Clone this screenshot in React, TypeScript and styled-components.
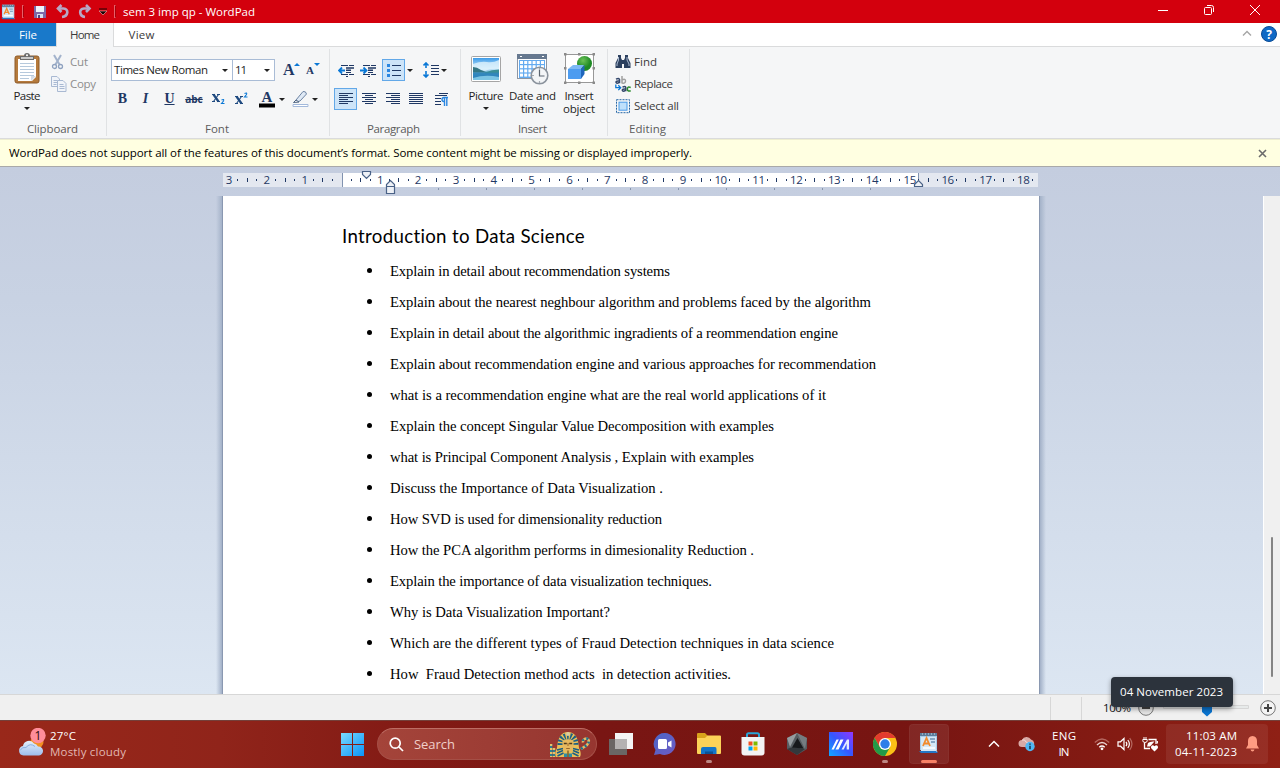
import React, { useLayoutEffect, useRef, useState } from "react";
import styled, { createGlobalStyle } from "styled-components";

const Global = createGlobalStyle`
  * { box-sizing: border-box; }
  html, body { margin: 0; padding: 0; }
  body {
    width: 1280px; height: 768px; overflow: hidden;
    font-family: "Open Sans", "Noto Sans", sans-serif;
    font-size: 11.5px; line-height: 16px; color: #1e1e1e;
  }
  svg { display: block; flex: none; }
`;

/* ---------- text fitted to a given width by tracking ---------- */

const FitBox = styled.span<{ $w: number }>`
  display: block;
  flex: none;
  width: ${(p) => p.$w}px;
  white-space: pre;
`;

function Fit({ w, children }: { w: number; children: string }) {
  const ref = useRef<HTMLSpanElement>(null);
  const [spacing, setSpacing] = useState(0);
  useLayoutEffect(() => {
    if (ref.current) {
      const natural = ref.current.getBoundingClientRect().width;
      setSpacing((w - natural) / Math.max(1, children.length - 1));
    }
  }, [w, children]);
  return (
    <FitBox $w={w}>
      <span ref={ref} style={{ letterSpacing: spacing }}>{children}</span>
    </FitBox>
  );
}

/* ---------- window ---------- */

const Screen = styled.div`
  position: relative;
  width: 1280px; height: 768px;
  display: flex; flex-direction: column;
  overflow: hidden;
`;

const TitleBar = styled.header`
  height: 23px; flex: none;
  display: flex; align-items: center;
  background: #d3000d; color: #fff;
  padding-left: 1px;
`;
const TitleSep = styled.div<{ $ml: number; $mr: number }>`
  width: 2px; height: 13px;
  margin: 0 ${(p) => p.$mr}px 0 ${(p) => p.$ml}px;
  border: 1px solid #e8606a; border-right-color: #a8000a;
`;
const Gap = styled.div<{ $w: number }>`
  width: ${(p) => p.$w}px; flex: none;
`;
const WindowButtons = styled.div`
  margin-left: auto; display: flex; align-items: center;
  height: 20px; padding: 0 19px 3px 0; gap: 34px;
`;

const TabBar = styled.nav`
  height: 24px; flex: none;
  display: flex; background: #fff;
  border-bottom: 1px solid #dadbdc;
`;
const Tab = styled.div<{ $w: number; $kind?: "file" | "active" }>`
  width: ${(p) => p.$w}px;
  height: ${(p) => (p.$kind === "active" ? 24 : 23)}px;
  display: flex; justify-content: center; align-items: center;
  padding-bottom: ${(p) => (p.$kind === "active" ? 1 : 0)}px;
  color: ${(p) => (p.$kind === "file" ? "#fff" : "#3b3b3b")};
  background: ${(p) => (p.$kind === "file" ? "#1979ca" : p.$kind === "active" ? "#f5f6f7" : "transparent")};
  border: 0 solid #dadbdc;
  border-width: ${(p) => (p.$kind === "active" ? "0 1px" : "0")};
`;
const TabTools = styled.div`
  margin-left: auto; display: flex; align-items: center; gap: 9px; padding: 0 3px 2px 0;
`;

/* ---------- ribbon ---------- */

const Ribbon = styled.section`
  height: 92px; flex: none;
  display: flex; background: #f5f6f7;
  border-bottom: 1px solid #dadbdc;
  padding-top: 2px;
`;
const Group = styled.div<{ $w: number }>`
  width: ${(p) => p.$w}px; height: 87px;
  display: flex; flex-direction: column;
  border-right: 1px solid #e0e2e4;
`;
const GroupBody = styled.div`
  height: 72px; display: flex;
`;
const GroupLabel = styled.div`
  display: flex; justify-content: center; color: #5c5c5c;
  padding: 1px 2px 0 0; height: 16px;
`;
const BigButton = styled.div<{ $w: number; $ml?: number }>`
  width: ${(p) => p.$w}px; margin-left: ${(p) => p.$ml ?? 0}px;
  padding-top: 4px;
  display: flex; flex-direction: column; align-items: center;
  flex: none;
`;
const BigIcon = styled.div`
  height: 36px; display: flex; flex: none; align-items: flex-start;
`;
const BigText = styled.div`
  height: 13px; line-height: 13px; flex: none;
`;
const Caret = styled.i<{ $ml?: number; $mt?: number }>`
  width: 0; height: 0; flex: none;
  margin-left: ${(p) => p.$ml ?? 0}px; margin-top: ${(p) => p.$mt ?? 0}px;
  border: 3px solid transparent; border-top-color: #222; border-bottom: 0;
`;
const SmallList = styled.div<{ $ml: number }>`
  display: flex; flex-direction: column; gap: 4px;
  padding-top: 4px; margin-left: ${(p) => p.$ml}px;
`;
const SmallItem = styled.div<{ $dim?: boolean }>`
  display: flex; align-items: center; gap: 3px; height: 18px;
  color: ${(p) => (p.$dim ? "#8d8d8d" : "#3b3b3b")};
`;
const Rows = styled.div`
  display: flex; flex-direction: column; gap: 7px;
  padding: 10px 0 0 4px;
`;
const ToolRow = styled.div`
  display: flex; align-items: center; height: 22px;
`;
const Combo = styled.div<{ $w: number; $first?: boolean }>`
  width: ${(p) => p.$w}px; height: 22px;
  display: flex; align-items: center; justify-content: space-between;
  padding: 0 4px 0 2px;
  background: #fff; border: 1px solid #a9bcd6;
  border-left-width: ${(p) => (p.$first ? 1 : 0)}px;
`;
const Glyph = styled.div<{ $w: number; $size?: number; $italic?: boolean; $line?: string; $sans?: boolean }>`
  width: ${(p) => p.$w}px; flex: none;
  text-align: center;
  font-family: ${(p) => (p.$sans ? '"Open Sans", sans-serif' : '"Liberation Serif", serif')};
  font-size: ${(p) => p.$size ?? 14}px;
  font-weight: 700;
  font-style: ${(p) => (p.$italic ? "italic" : "normal")};
  text-decoration: ${(p) => p.$line ?? "none"};
  color: #1f3864;
`;
const Toggle = styled.div`
  width: 23px; height: 22px; flex: none;
  display: flex; align-items: center; justify-content: center;
  background: #cde4f8; border: 1px solid #62a8e8;
`;

/* ---------- notice, ruler, page ---------- */

const Notice = styled.div`
  height: 28px; flex: none;
  display: flex; align-items: center; justify-content: space-between;
  padding: 0 13px 0 9px;
  background: #ffffe1; color: #000;
  border-bottom: 1px solid #a9a9a9; border-top: 1px solid #eeeed0;
`;
const Workspace = styled.main`
  height: 527px; flex: none;
  display: flex; flex-direction: column;
  background: linear-gradient(#c4cddf, #c8d2e3 25%, #dce6f2);
`;
const RulerStrip = styled.div`
  height: 29px; flex: none; padding-left: 215px;
`;
const Scroller = styled.div`
  height: 498px; display: flex;
`;
const PageEdge = styled.div<{ $right?: boolean }>`
  width: 7px; flex: none;
  margin-left: ${(p) => (p.$right ? 0 : 216)}px;
  background: linear-gradient(to ${(p) => (p.$right ? "right" : "left")}, #8593ac 0, #8f9db6 1px, #a7b5cb 1.5px, rgba(190, 202, 221, 0));
`;
const Page = styled.article`
  width: 816px; background: #fff; flex: none; overflow: hidden; color: #000;
`;
const Heading = styled.h1`
  margin: 26px 0 0 119px; height: 29px;
  font: 400 18.7px/29px Lato, sans-serif;
`;
const Bullets = styled.ul`
  list-style: none; margin: 4px 0 0; padding: 0 0 0 144px;
`;
const Bullet = styled.li`
  height: 31px; display: flex; align-items: center;
  font: 14.67px/20px "Liberation Serif", serif;
`;
const Dot = styled.i`
  width: 5px; height: 5px; border-radius: 50%; background: #000; margin: 0 18px 1px 0; flex: none;
`;
const ScrollTrack = styled.div`
  width: 17px; margin-left: auto; background: #f0f0f0; border-left: 1px solid #fff;
  padding: 341px 0 0 7px;
`;
const ScrollThumb = styled.div`
  width: 2px; height: 140px; background: #858585; border-radius: 1px;
`;

const StatusBar = styled.footer`
  height: 26px; flex: none; display: flex; align-items: center;
  justify-content: flex-end; padding: 1px 4px 0 0;
  background: #f0f0f0; border-top: 1px solid #d7d7d7; color: #111;
`;
const StatusSep = styled.div<{ $mr: number }>`
  width: 1px; height: 23px; background: #d7d7d7; margin-right: ${(p) => p.$mr}px;
`;

const Tooltip = styled.div`
  position: absolute; left: 1111px; top: 677px;
  width: 122px; height: 30px; border-radius: 4px;
  display: flex; align-items: center; padding-left: 9px;
  background: #2c333c; color: #fff;
  box-shadow: 0 2px 5px rgba(0, 0, 0, 0.4);
`;

/* ---------- taskbar ---------- */

const Taskbar = styled.div`
  height: 48px; flex: none; display: flex; align-items: center;
  padding-bottom: 1px;
  background: linear-gradient(90deg, #99281a 0, #90241a 220px, #831b15 400px, #791613 600px, #771512 900px, #841b13 1120px, #8f2015 1280px);
  border-top: 1px solid #74403a; color: #fff;
`;
const Stack = styled.div<{ $align?: string }>`
  display: flex; flex-direction: column;
  align-items: ${(p) => p.$align ?? "flex-start"};
  padding-bottom: 1px;
`;
const Muted = styled.div`
  color: #e2b8b2;
`;
const SearchPill = styled.div`
  width: 220px; height: 32px; border-radius: 16px; flex: none;
  display: flex; align-items: center; padding: 0 6px 0 11px;
  background: linear-gradient(90deg, #a4443a, #963630);
  border: 1px solid #a54f46; border-top-color: #bd6d64;
  color: #f0cfca; font-size: 13px;
`;
const TaskItem = styled.div<{ $w: number; $active?: boolean }>`
  width: ${(p) => p.$w}px; height: 40px; flex: none;
  display: flex; flex-direction: column; align-items: center;
  padding-top: 8px; border-radius: 4px;
  background: ${(p) => (p.$active ? "rgba(255,255,255,.08)" : "transparent")};
  box-shadow: ${(p) => (p.$active ? "inset 0 0 0 1px rgba(255,255,255,.04)" : "none")};
`;
const Running = styled.div<{ $w: number; $c: string }>`
  width: ${(p) => p.$w}px; height: 3px; border-radius: 2px;
  background: ${(p) => p.$c}; margin-top: auto; margin-bottom: 1px;
`;
const ClockPanel = styled.div`
  width: 102px; height: 40px; border-radius: 4px; flex: none;
  display: flex; align-items: center; justify-content: flex-end; gap: 9px;
  padding-right: 9px;
  background: rgba(255, 255, 255, 0.07);
`;

/* ---------- icons ---------- */

const navy = "#1f3864";

function WordPadIcon({ w = 15, h = 16 }: { w?: number; h?: number }) {
  return (
    <svg width={w} height={h} viewBox="0 0 20 22">
      <path d="M1 1h17v17H1z" fill="#a9cdea" />
      <path d="M1 1h17v3H1z" fill="#5c7c9a" />
      <path d="M3 2h1M6 2h1M9 2h1M12 2h1M15 2h1" stroke="#c8dcea" />
      <path d="M2 5h15v12l1.500 3H2z" fill="#d5e7f5" />
      <path d="M0 19h17l2 2H2z" fill="#2476c4" />
      <path d="M4 14 7.500 6 11 14M5.200 11.500h4.500" fill="none" stroke="#f28a2c" strokeWidth="1.800" />
      <path d="M11 7h5M12 10h4" stroke="#6c91b3" strokeWidth="1.300" />
      <path d="M4 16h12" stroke="#fff" strokeWidth="1.500" />
    </svg>
  );
}

const align = {
  left: [[0, 14], [0, 9]],
  center: [[0, 14], [3, 11]],
  right: [[0, 14], [5, 14]],
  full: [[0, 14], [0, 14]],
};
function AlignIcon({ kind }: { kind: keyof typeof align }) {
  return (
    <svg width="14" height="12" shapeRendering="crispEdges">
      {[0, 1, 2, 3, 4, 5].map((i) => {
        const [a, b] = align[kind][i % 2];
        return <path key={i} d={`M${a} ${i * 2 + 0.5}H${b}`} stroke={navy} />;
      })}
    </svg>
  );
}

function IndentIcon({ out }: { out?: boolean }) {
  return (
    <svg width="17" height="15">
      <path d="M3 2.500H10M11 2.500H16M8 9.500H13M3 11.500H10M11 11.500H16M8 13.500H10" stroke={navy} />
      <path d="M8 5h8M8 7.300h5" stroke={navy} strokeWidth="1.500" />
      <path d={out ? "M7 7.500H1M4 4.500 1 7.500l3 3" : "M0 7.500h6M3.500 4.500l3 3-3 3"} fill="none" stroke="#0a78d6" strokeWidth="1.800" />
    </svg>
  );
}

function ScissorsIcon() {
  return (
    <svg width="13" height="16">
      <path d="M3 1l5.500 9.500M10 1 4.500 10.500" stroke="#a3b3cc" strokeWidth="2" />
      <circle cx="3.500" cy="12.500" r="2" fill="none" stroke="#8fa2c0" strokeWidth="1.300" />
      <circle cx="9.500" cy="12.500" r="2" fill="none" stroke="#8fa2c0" strokeWidth="1.300" />
    </svg>
  );
}
function CopyIcon() {
  return (
    <svg width="16" height="16" fill="#f1f4f9" stroke="#a9b9d2">
      <path d="M.5.5H6L8.500 3v7.500h-8zM2.500 4.500h4M2.500 6.500h4M2.500 8.500h3" />
      <path d="M6.500 4.500H12l3 3v8H6.500zM8.500 8.500h4M8.500 10.500h5M8.500 12.500h5" />
    </svg>
  );
}
function PasteIcon() {
  return (
    <svg width="26" height="31">
      <rect x="1" y="3" width="24" height="27" rx="2" fill="#b57a3c" stroke="#8d5a28" />
      <path d="M4 6h18v18l-4 4H4z" fill="#fff" />
      <path d="M6 10.500h14M6 13.500h14M6 16.500h14M6 19.500h14M6 22.500h14M6 25.500h9" stroke="#b6c9dc" />
      <path d="M22 23h-5v5z" fill="#d5dee8" />
      <path d="M6 3h4q0-3 3-3t3 3h4v4H6z" fill="#6a6a6a" />
      <path d="M7 4h12v2H7z" fill="#c9c9c9" />
      <circle cx="13" cy="2.300" r="1" fill="#fff" />
    </svg>
  );
}
function PictureIcon() {
  return (
    <svg width="32" height="30">
      <defs>
        <linearGradient id="sky" x1="0" y1="0" x2="0" y2="1">
          <stop offset="0" stopColor="#3c9be8" />
          <stop offset=".5" stopColor="#cdeafc" />
          <stop offset=".7" stopColor="#3d93bd" />
          <stop offset="1" stopColor="#2c78b4" />
        </linearGradient>
      </defs>
      <rect x="1.500" y="3.500" width="29" height="25" rx="1" fill="#fff" stroke="#a5a5a5" />
      <rect x="3" y="5" width="26" height="22" fill="url(#sky)" />
      <path d="M3 11q8-3 14-2t12-2v9q-9-1-14 2L3 15z" fill="#dff2fd" opacity=".8" />
      <path d="M3 14q4 0 8 3l6 2.500H3z" fill="#347684" />
      <path d="M15 19.500q7-3 14-3v4H15z" fill="#3b8f96" />
      <path d="M3 19.500h26V24H3z" fill="#2f83bd" opacity=".7" />
      <path d="M3 25q12-4 26-1v3H3z" fill="#7cc4e4" />
    </svg>
  );
}
function DateIcon() {
  return (
    <svg width="33" height="32">
      <rect x="1.500" y="1.500" width="29" height="24" fill="#fff" stroke="#8d96a3" />
      <rect x="1" y="1" width="30" height="5" fill="#66788f" />
      <path d="M4 3.500h2M26 3.500h2" stroke="#fff" />
      <path d="M3 7h26v13H17v5H3z" fill="#64abf0" />
      <g fill="#fff">
        {[0, 1, 2, 3].flatMap((r) =>
          [0, 1, 2, 3, 4, 5].map((c) => (
            <rect key={`${r}-${c}`} x={4 + c * 4.200} y={8 + r * 4.200} width="3" height="3" opacity={c > 3 && r > 2 ? 0 : 1} />
          ))
        )}
      </g>
      <circle cx="23.500" cy="22.500" r="8.300" fill="#f3f5f7" stroke="#8b939d" strokeWidth="1.600" />
      <path d="M23.500 17v6h5M23.500 15.500v1M23.500 28.500v1M16.500 22.500h1" fill="none" stroke="#5b6570" strokeWidth="1.200" />
    </svg>
  );
}
function ObjectIcon() {
  return (
    <svg width="31" height="31">
      <defs>
        <radialGradient id="ball" cx=".4" cy=".3">
          <stop offset="0" stopColor="#6cc258" />
          <stop offset="1" stopColor="#1f8a25" />
        </radialGradient>
      </defs>
      <rect x="1.500" y="1.500" width="28" height="28" fill="#fff" stroke="#989898" />
      <circle cx="20.500" cy="10.500" r="7.500" fill="url(#ball)" />
      <path d="M4 16l5-4h11l-3 4z" fill="#7db8f5" />
      <path d="M4 16h13v10H4z" fill="#4d9cf0" />
      <path d="M17 16l3.500-4v9L17 26z" fill="#1f66bc" />
      <path d="M0 0h2.500v2.500H0zM14 0h2.500v2.500H14zM28.500 0H31v2.500h-2.500zM0 14h2.500v2.500H0zM28.500 14H31v2.500h-2.500zM0 28.500h2.500V31H0zM14 28.500h2.500V31H14zM28.500 28.500H31V31h-2.500z" fill="#8a8a8a" />
    </svg>
  );
}
function FindIcon() {
  return (
    <svg width="16" height="14" fill="#2c405f">
      <path d="M3 0h3v3l1 2v8H.5V8L3 3zM10 0h3v3l2.500 5v5H9V5l1-2z" />
      <path d="M6.500 5h3v4h-3z" />
      <path d="M3.500 2v3L2 9v2M12 2v3l2 4v2" fill="none" stroke="#a9b9d0" />
    </svg>
  );
}
function ReplaceIcon() {
  return (
    <svg width="16" height="16" fill="none" strokeWidth="1.500">
      <path d="M1 3.200q3-1.500 3.500.3v3.800M4.300 5Q.8 4.800 1 6.300q.5 1.800 3.300 0" stroke="#33476b" />
      <path d="M7 0v7.500M7 4q3.500-1.700 3.500 1T7 7" stroke="#a0a0a0" />
      <path d="M7.500 11.200q3-1.500 3.300.3v3.800M10.600 13q-3.500-.2-3.300 1.300.4 1.800 3.300 0" stroke="#33476b" />
      <path d="M15.700 11.500q-3.300-1.500-3.300 1.500t3.300 1.700" stroke="#2a8a2a" />
      <path d="M.8 8.500v3.200H5M3.300 9.300l2.400 2.400-2.400 2.400" stroke="#0a78d6" strokeWidth="1.300" />
    </svg>
  );
}
function SelectIcon() {
  return (
    <svg width="16" height="15">
      <rect x="1.500" y=".7" width="13" height="13" fill="none" stroke="#2767a6" strokeDasharray="2 1" />
      <rect x="4" y="3.200" width="8" height="8" fill="#bfe0fb" stroke="#4b9be8" />
    </svg>
  );
}
function ScriptIcon({ sup }: { sup?: boolean }) {
  return (
    <svg width="24" height="16" fill="none" stroke="#1f4a80">
      <path d={sup ? "M6.500 5.500l5 7" : "M7.500 3.500l5 7"} strokeWidth="2.200" />
      <path d={sup ? "M11.500 5.500l-5 7M5 5.500h3M10 5.500h3M5 12.500h3M10 12.500h3" : "M12.500 3.500l-5 7M6 3.500h3M11 3.500h3M6 10.500h3M11 10.500h3"} strokeWidth="1.100" />
      <path d={sup ? "M14.500 2.500q3-1.500 2 1l-2 2.500h3" : "M15.500 9q3-1.500 2 1l-2 2.500h3"} stroke="#0a78d6" strokeWidth="1.100" />
    </svg>
  );
}

function Ruler() {
  const zero = 127.3;
  const cm = 37.83;
  const marks: React.ReactElement[] = [];
  for (let n = -3; n <= 18; n++) {
    const x = zero + n * cm;
    if (n !== 0) {
      marks.push(
        <text key={`t${n}`} x={x} y="17" textAnchor="middle" fontSize="11.500" letterSpacing="-.4">{Math.abs(n)}</text>
      );
    }
    marks.push(<path key={`a${n}`} d={`M${Math.round(x + cm / 4) - 0.5} 12v2`} stroke={navy} />);
    if (n < 18) {
      marks.push(<path key={`b${n}`} d={`M${Math.round(x + cm / 2) - 0.5} 11v4`} stroke={navy} />);
      marks.push(<path key={`c${n}`} d={`M${Math.round(x + (cm * 3) / 4) - 0.5} 12v2`} stroke={navy} />);
    }
  }
  for (let i = 2; i < 12; i++) {
    marks.push(<path key={`d${i}`} d={`M${127.5 + i * 48} 21v2`} stroke="#8795ad" />);
  }
  return (
    <svg width="840" height="29" fill={navy} fontFamily="Open Sans">
      <path d="M8 6h815v14H8z" fill="#e4e8f0" />
      <path d="M127 6h576v14H127z" fill="#fff" />
      <path d="M127.500 6v14M703.500 6v14" stroke="#8193b0" />
      {marks}
      <g fill="#eef1f6" stroke="#4a6287" strokeWidth="1.200">
        <path d="M147.500 4.500h8v3l-4 4-4-4z" />
        <path d="M171.500 26.500v-9l4-4 4 4v9zM171.500 19.500h8" />
        <path d="M699.500 19.500v-2l4-4 4 4v2z" />
      </g>
    </svg>
  );
}

function CloudIcon() {
  return (
    <svg width="32" height="32">
      <defs>
        <linearGradient id="cloud" x1="0" y1="0" x2="0" y2="1">
          <stop offset="0" stopColor="#e5effc" />
          <stop offset="1" stopColor="#9dbdec" />
        </linearGradient>
      </defs>
      <circle cx="19" cy="14" r="6.500" fill="#f29022" />
      <path d="M5.500 27.500a4.800 4.800 0 0 1-.5-9.500 6 6 0 0 1 11-2.500 6 6 0 0 1 4 3 4.500 4.500 0 0 1 1 9z" fill="url(#cloud)" />
      <path d="M2 22.500q2-4 6-3 4-5 9-1" fill="none" stroke="#8aaee0" />
      <circle cx="20" cy="7.500" r="7.700" fill="#ff8d9a" />
      <text x="20" y="11.800" textAnchor="middle" fontSize="12" fontFamily="Open Sans" fill="#2a0c0c">1</text>
    </svg>
  );
}
function StartIcon() {
  return (
    <svg width="23" height="23">
      <defs>
        <linearGradient id="win" gradientUnits="userSpaceOnUse" x1="0" y1="0" x2="23" y2="23">
          <stop offset="0" stopColor="#7adcff" />
          <stop offset="1" stopColor="#0a93f8" />
        </linearGradient>
      </defs>
      <path d="M0 0h11v11H0zM12 0h11v11H12zM0 12h11v11H0zM12 12h11v11H12z" fill="url(#win)" />
    </svg>
  );
}
function PharaohIcon() {
  return (
    <svg width="41" height="27">
      <path d="M1 13v13M4 17v9" stroke="#2a8191" strokeWidth="2.500" />
      <path d="M1 13v13M4 17v9" stroke="#e5c16a" strokeDasharray="2 2" strokeWidth="2.500" />
      <path d="M31 18l6-4q4-5-.5-6.500-4 .5-3.500 4" fill="none" stroke="#e0bc66" strokeWidth="2.600" />
      <path d="M31 18l6-4q4-5-.5-6.500-4 .5-3.500 4" fill="none" stroke="#1c6f90" strokeWidth="2.600" strokeDasharray="2 2.500" />
      <path d="M6 26Q4 23 7 17 8 1 18 1t11 16q3 6 1 9z" fill="#e9bf58" />
      <g fill="none" stroke="#1b5f85">
        <path d="M11 14Q11 5.500 18 5.500T25 14" strokeWidth="7" strokeDasharray="1.600 1.300" />
        <path d="M7 19l6-1.500M7 22l6-2.500M7.500 25l6-3M29 19l-6-1.500M29 22l-6-2.500M28.500 25l-6-3" strokeWidth="1.600" />
      </g>
      <path d="M12.500 10q5.500-3.500 11 0v6q-2 5.500-5.500 5.500T12.500 16z" fill="#e6b95f" />
      <path d="M13.800 12.500h3M19.200 12.500h3" stroke="#4b3a1c" strokeWidth="1.500" />
      <path d="M18 12v3M16.200 17.500h3.600" stroke="#99672b" />
      <path d="M14 22.500h8V26h-8z" fill="#2d8ca5" />
      <path d="M17.200 19.500h1.600V26h-1.600z" fill="#8d6a2a" />
      <circle cx="18" cy="3" r="2" fill="#d9cba0" />
    </svg>
  );
}
function TaskViewIcon() {
  return (
    <svg width="24" height="24">
      <path d="M6 1h18v16H6z" fill="#f4f4f4" />
      <path d="M0 7h18v16H0z" fill="#6a6665" />
      <path d="M6 7h12v10H6z" fill="#b4b2b2" />
    </svg>
  );
}
function ChatIcon() {
  return (
    <svg width="24" height="24">
      <defs>
        <linearGradient id="chat" x1="0" y1="0" x2="1" y2="1">
          <stop offset="0" stopColor="#4a66c6" />
          <stop offset="1" stopColor="#6f5bc4" />
        </linearGradient>
      </defs>
      <path d="M12 1a11 11 0 1 1-5 21l-6 1 1.500-5A11 11 0 0 1 12 1z" fill="url(#chat)" />
      <path d="M5 8.500q0-1.500 1.500-1.500h6Q14 7 14 8.500v7q0 1.500-1.500 1.500h-6Q5 17 5 15.500zM15 10.500l3.500-2v7l-3.500-2z" fill="#fff" />
    </svg>
  );
}
function FolderIcon() {
  return (
    <svg width="24" height="24">
      <path d="M0 2q0-1 1-1h7l3 3h-1v4H0z" fill="#d9a21b" />
      <path d="M0 6h8l2.500-2.500H23q1 0 1 1V21q0 1-1 1H1q-1 0-1-1z" fill="#fcd258" />
      <path d="M4 22v-5q0-2 2-2h12q1.500 0 1.500 2v5z" fill="#1475c8" />
      <path d="M8 22v-2.500h8V22z" fill="#0b5295" />
    </svg>
  );
}
function StoreIcon() {
  return (
    <svg width="24" height="24">
      <path d="M6 5.500V2.800Q6 1.200 7.600 1.200h8.800Q18 1.200 18 2.800v2.700" fill="none" stroke="#2aa5d8" strokeWidth="2" />
      <path d="M.5 5h23v15.500q0 3-3 3h-17q-3 0-3-3z" fill="#f3f3f4" />
      <path d="M7.500 9.500h4v4h-4z" fill="#f25022" />
      <path d="M12.500 9.500h4v4h-4z" fill="#7fba00" />
      <path d="M7.500 14.500h4v4h-4z" fill="#00a4ef" />
      <path d="M12.500 14.500h4v4h-4z" fill="#ffb900" />
    </svg>
  );
}
function HexIcon() {
  return (
    <svg width="22" height="24">
      <path d="M11 1l10 5v11l-10 6L1 17V6z" fill="#565c61" />
      <path d="M11 1 1 6l3 9z" fill="#969ca0" />
      <path d="M11 1l10 5-2 11z" fill="#757c81" />
      <path d="M1 17l6-2 12 2-8 6z" fill="#33383c" />
      <path d="M11.500 6 6 15.500l11.500 1z" fill="#17191c" />
    </svg>
  );
}
function ArmouryIcon() {
  return (
    <svg width="24" height="24">
      <defs>
        <linearGradient id="arm" x1="1" y1="0" x2="0" y2="1">
          <stop offset="0" stopColor="#9236ff" />
          <stop offset=".5" stopColor="#3557ff" />
          <stop offset="1" stopColor="#12a8ff" />
        </linearGradient>
      </defs>
      <path d="M0 0h24v24H0z" fill="url(#arm)" />
      <path d="M2.500 17.500 7.500 7.500h2.300L4.800 17.500zM6.500 17.500l5-10h3l-5 10z" fill="#fff" />
      <path d="M12.500 17.500l5.500-10h2v10h-2.300v-6l-3 6z" fill="#e4ebff" />
    </svg>
  );
}
function ChromeIcon() {
  return (
    <svg width="24" height="24">
      <circle cx="12" cy="12" r="12" fill="#fbc116" />
      <path d="M12 6h10.400A12 12 0 0 0 1.600 6L6.800 15z" fill="#e33b2e" />
      <path d="M1.600 6a12 12 0 0 0 10.400 18l5.200-9H6.800z" fill="#229a48" />
      <circle cx="12" cy="12" r="6" fill="#fff" />
      <circle cx="12" cy="12" r="4.700" fill="#2d7de9" />
    </svg>
  );
}
function OneDriveIcon() {
  return (
    <svg width="18" height="16">
      <path d="M4 11a3.500 3.500 0 0 1 0-7 5 5 0 0 1 9-.5 4 4 0 0 1 1 7.500z" fill="#d8aaa6" />
      <path d="M4 4q3-1 4 2l5 2" fill="none" stroke="#f1dcda" />
      <circle cx="12" cy="10.500" r="4.700" fill="#4fb7f4" />
      <path d="M12 9.800v3.400M12 7.500v1.300" stroke="#13293c" strokeWidth="1.400" />
    </svg>
  );
}
function WifiIcon() {
  return (
    <svg width="16" height="14" fill="none" strokeWidth="1.300">
      <path d="M.8 5.500Q8-1.500 15.200 5.500" stroke="#b5675f" />
      <path d="M3 8q5-5 10 0" stroke="#e9d2cf" />
      <path d="M5.300 10.200q2.700-2.500 5.400 0" stroke="#fff" />
      <circle cx="8" cy="11.800" r="1.400" fill="#fff" />
    </svg>
  );
}
function SoundIcon() {
  return (
    <svg width="16" height="14" fill="none" stroke="#fff" strokeWidth="1.200">
      <path d="M1 4.800h2.500L7 1.500v11L3.500 9.200H1z" />
      <path d="M9 4.800q1.700 2.200 0 4.400M10.800 3q3.200 4 0 8" />
      <path d="M12.700 1.200q4.500 5.800 0 11.600" stroke="#b5675f" />
    </svg>
  );
}
function BatteryIcon() {
  return (
    <svg width="17" height="16" fill="none" stroke="#fff" strokeWidth="1.300">
      <path d="M6.500 3.500H14V8M2.500 7v5.500H8" />
      <path d="M5 10.500 6 7q2-2 6.500-1.500L8 10.500z" fill="#fff" stroke="none" />
      <path d="M.8 3.500h4.400v1.200q0 1.800-2.200 1.800T.8 4.700zM2 1v2M4 1v2" strokeWidth="1" />
      <path d="M15.300 5v2.500" />
      <path d="M12.500 15.500 9 12q-.3-2.500 1.500-2.800 1.300 0 2 1 .8-1 2-1 1.800.3 1.500 2.800z" fill="#fff" stroke="none" />
    </svg>
  );
}

/* ---------- content ---------- */

const questions: [string, number][] = [
  ["Explain in detail about recommendation systems", 280],
  ["Explain about the nearest neghbour algorithm and problems faced by the algorithm", 481],
  ["Explain in detail about the algorithmic ingradients of a reommendation engine", 448],
  ["Explain about recommendation engine and various approaches for recommendation", 486],
  ["what is a recommendation engine what are the real world applications of it", 436],
  ["Explain the concept Singular Value Decomposition with examples", 384],
  ["what is Principal Component Analysis , Explain with examples", 364],
  ["Discuss the Importance of Data Visualization .", 273],
  ["How SVD is used for dimensionality reduction", 272],
  ["How the PCA algorithm performs in dimesionality Reduction .", 364],
  ["Explain the importance of data visualization techniques.", 322],
  ["Why is Data Visualization Important?", 220],
  ["Which are the different types of Fraud Detection techniques in data science", 444],
  ["How  Fraud Detection method acts  in detection activities.", 341],
];

function RibbonBar() {
  return (
    <Ribbon>
      <Group $w={107}>
        <GroupBody>
          <BigButton $w={32} $ml={11}>
            <BigIcon><PasteIcon /></BigIcon>
            <BigText><Fit w={27}>Paste</Fit></BigText>
            <Caret $mt={5} />
          </BigButton>
          <SmallList $ml={8}>
            <SmallItem $dim><ScissorsIcon /><Gap $w={0} /><Fit w={18}>Cut</Fit></SmallItem>
            <SmallItem $dim><CopyIcon /><Fit w={26}>Copy</Fit></SmallItem>
          </SmallList>
        </GroupBody>
        <GroupLabel><Gap $w={1} /><Fit w={51}>Clipboard</Fit></GroupLabel>
      </Group>

      <Group $w={223}>
        <GroupBody>
          <Rows>
            <ToolRow>
              <Combo $w={122} $first><Fit w={94}>Times New Roman</Fit><Caret /></Combo>
              <Combo $w={42}><Fit w={12}>11</Fit><Caret /></Combo>
              <Gap $w={8} />
              <Glyph $w={11} $size={16}>A</Glyph>
              <svg width="6" height="16"><path d="M0 4l3-3 3 3z" fill="#0a78d6" /></svg>
              <Gap $w={6} />
              <Glyph $w={8} $size={11}>A</Glyph>
              <svg width="6" height="16"><path d="M0 1h6L3 4z" fill="#0a78d6" /></svg>
            </ToolRow>
            <ToolRow>
              <Glyph $w={23}>B</Glyph>
              <Glyph $w={23} $italic>I</Glyph>
              <Glyph $w={25} $line="underline">U</Glyph>
              <Glyph $w={24} $size={10} $line="line-through" $sans>abc</Glyph>
              <ScriptIcon />
              <ScriptIcon sup />
              <Gap $w={5} />
              <svg width="16" height="22">
                <text x="8" y="14" textAnchor="middle" fontFamily="Liberation Serif" fontSize="15" fontWeight="700" fill={navy}>A</text>
                <path d="M0 15.500h16v4H0z" />
              </svg>
              <Caret $ml={4} />
              <Gap $w={7} />
              <svg width="17" height="18">
                <path d="M4 10 11 1.500q3-.5 3.500 2.500L8 11l-4 1z" fill="#dfe9f5" stroke="#6c83a3" />
                <path d="M1.500 12.500 4 10l3 2z" fill="#fff" stroke="#4e6482" />
                <path d="M1 14.500h15v2H1z" fill="#fff" stroke="#a3b9db" />
              </svg>
              <Caret $ml={3} />
            </ToolRow>
          </Rows>
        </GroupBody>
        <GroupLabel><Fit w={24}>Font</Fit></GroupLabel>
      </Group>

      <Group $w={131}>
        <GroupBody>
          <Rows>
            <ToolRow>
              <Gap $w={4} />
              <IndentIcon out />
              <Gap $w={5} />
              <IndentIcon />
              <Gap $w={5} />
              <Toggle>
                <svg width="16" height="14">
                  <path d="M6 2.500h9M6 7.500h9M6 12.500h9" stroke={navy} />
                  <path d="M1 1h3v3H1zM1 6h3v3H1zM1 11h3v3H1z" fill="#2a86e0" />
                </svg>
              </Toggle>
              <Caret $ml={2} />
              <Gap $w={10} />
              <svg width="16" height="16">
                <path d="M8 3.500h8M8 6.500h8M8 9.500h8M8 12.500h8" stroke={navy} />
                <path d="M3 1v5M.5 3.500 3 1l2.500 2.500M3 9v6M.5 12.500 3 15l2.500-2.500" fill="none" stroke="#0a78d6" strokeWidth="1.600" />
              </svg>
              <Caret $ml={2} />
            </ToolRow>
            <ToolRow>
              <Toggle><AlignIcon kind="left" /></Toggle>
              <Gap $w={5} /><AlignIcon kind="center" />
              <Gap $w={10} /><AlignIcon kind="right" />
              <Gap $w={9} /><AlignIcon kind="full" />
              <Gap $w={12} />
              <svg width="14" height="14">
                <path d="M4 1.500h9M0 3.500h12M0 6.500h6M0 9.500h6M0 12.500h6" stroke={navy} />
                <path d="M13 5.500H9q-2 0-2 2t2 2M9.500 5v9M11.800 5v9" fill="none" stroke="#2a86e0" strokeWidth="1.400" />
              </svg>
            </ToolRow>
          </Rows>
        </GroupBody>
        <GroupLabel><Fit w={53}>Paragraph</Fit><Gap $w={1} /></GroupLabel>
      </Group>

      <Group $w={147}>
        <GroupBody>
          <BigButton $w={46} $ml={2}>
            <BigIcon><PictureIcon /></BigIcon>
            <BigText><Fit w={35}>Picture</Fit></BigText>
            <Caret $mt={5} />
          </BigButton>
          <BigButton $w={47}>
            <BigIcon><DateIcon /></BigIcon>
            <BigText><Fit w={47}>Date and</Fit></BigText>
            <BigText><Fit w={23}>time</Fit></BigText>
          </BigButton>
          <BigButton $w={46}>
            <BigIcon><ObjectIcon /></BigIcon>
            <BigText><Fit w={29}>Insert</Fit></BigText>
            <BigText><Fit w={32}>object</Fit></BigText>
          </BigButton>
        </GroupBody>
        <GroupLabel><Fit w={29}>Insert</Fit><Gap $w={1} /></GroupLabel>
      </Group>

      <Group $w={82}>
        <GroupBody>
          <SmallList $ml={7}>
            <SmallItem><FindIcon /><Fit w={23}>Find</Fit></SmallItem>
            <SmallItem><ReplaceIcon /><Fit w={39}>Replace</Fit></SmallItem>
            <SmallItem><SelectIcon /><Fit w={45}>Select all</Fit></SmallItem>
          </SmallList>
        </GroupBody>
        <GroupLabel><Fit w={37}>Editing</Fit></GroupLabel>
      </Group>
    </Ribbon>
  );
}

function TaskbarView() {
  return (
    <Taskbar>
      <Gap $w={18} />
      <CloudIcon />
      <Stack>
        <Fit w={26}>27°C</Fit>
        <Muted><Fit w={76}>Mostly cloudy</Fit></Muted>
      </Stack>
      <Gap $w={215} />
      <StartIcon />
      <Gap $w={13} />
      <SearchPill>
        <svg width="15" height="15" fill="none" stroke="#fff" strokeWidth="1.700">
          <circle cx="6.200" cy="6.200" r="5" />
          <path d="M10 10l4 4" />
        </svg>
        <Gap $w={10} />
        <Fit w={41}>Search</Fit>
        <Gap $w={95} />
        <PharaohIcon />
      </SearchPill>
      <Gap $w={2} />
      <TaskItem $w={44}><TaskViewIcon /></TaskItem>
      <TaskItem $w={44}><ChatIcon /></TaskItem>
      <TaskItem $w={44}><FolderIcon /><Running $w={6} $c="#bd8783" /></TaskItem>
      <TaskItem $w={44}><StoreIcon /></TaskItem>
      <TaskItem $w={44}><HexIcon /></TaskItem>
      <TaskItem $w={44}><ArmouryIcon /></TaskItem>
      <TaskItem $w={44}><ChromeIcon /><Running $w={6} $c="#bd8783" /></TaskItem>
      <Gap $w={2} />
      <TaskItem $w={40} $active><WordPadIcon w={20} h={22} /><Running $w={16} $c="#f78166" /></TaskItem>
      <Gap $w={39} />
      <svg width="12" height="8" fill="none" stroke="#fff" strokeWidth="1.500"><path d="M1 6.500 6 1.500l5 5" /></svg>
      <Gap $w={18} />
      <OneDriveIcon />
      <Gap $w={16} />
      <Stack $align="center">
        <Fit w={24}>ENG</Fit>
        <Fit w={11}>IN</Fit>
      </Stack>
      <Gap $w={18} />
      <WifiIcon />
      <Gap $w={7} />
      <SoundIcon />
      <Gap $w={9} />
      <BatteryIcon />
      <Gap $w={7} />
      <ClockPanel>
        <Stack $align="flex-end">
          <Fit w={51}>11:03 AM</Fit>
          <Fit w={62}>04-11-2023</Fit>
        </Stack>
        <svg width="13" height="17" fill="#ff9c82">
          <path d="M6.500 0q4.500.5 4.500 5v4l2 3.500H0L2 9V5Q2 .5 6.500 0zM4.500 13.500h4q-.5 2-2 2t-2-2z" />
        </svg>
      </ClockPanel>
    </Taskbar>
  );
}

export default function App() {
  return (
    <>
      <Global />
      <Screen>
        <TitleBar>
          <WordPadIcon />
          <TitleSep $ml={6} $mr={9} />
          <svg width="14" height="14">
            <path d="M1 1h12v12H1z" fill="#7d68a8" />
            <path d="M3 1h8v6H3z" fill="#edf2fa" />
            <path d="M4 9h6v4H4z" fill="#d8dff0" />
            <path d="M5 10h2v3H5z" fill="#4d4687" />
          </svg>
          <Gap $w={9} />
          <svg width="15" height="15" fill="none" stroke="#b7a7c5" strokeWidth="2.600">
            <path d="M2 4.500h5.500q4 .5 3.800 4-.5 4-5.300 4.500" />
            <path d="M5.500 1 2 4.500 5.500 8" />
          </svg>
          <Gap $w={6} />
          <svg width="15" height="15" fill="none" stroke="#b7a7c5" strokeWidth="2.600">
            <path d="M12 4.500H7q-4 .5-3.800 4Q3.700 12.500 8 13" />
            <path d="M9 1l3.500 3.500L9 8" />
          </svg>
          <Gap $w={7} />
          <svg width="8" height="8">
            <path d="M0 1h8" stroke="#1a0303" />
            <path d="M0 3h8L4 7z" fill="#1a0303" stroke="#f5b4b8" strokeWidth=".6" />
          </svg>
          <TitleSep $ml={7} $mr={7} />
          <Fit w={132}>sem 3 imp qp - WordPad</Fit>
          <WindowButtons>
            <svg width="12" height="12"><path d="M1 6.500h10" stroke="#fff" /></svg>
            <svg width="12" height="12" fill="none" stroke="#fff">
              <rect x="1.500" y="3.500" width="7" height="7" rx="1" />
              <path d="M4 1.500h4.500q2 0 2 2V8" />
            </svg>
            <svg width="12" height="12"><path d="M1 1l10 10M11 1 1 11" stroke="#fff" /></svg>
          </WindowButtons>
        </TitleBar>
        <TabBar>
          <Tab $w={56} $kind="file"><Fit w={18}>File</Fit></Tab>
          <Tab $w={58} $kind="active"><Fit w={30}>Home</Fit></Tab>
          <Tab $w={55}><Fit w={26}>View</Fit></Tab>
          <TabTools>
            <svg width="10" height="7" fill="none" stroke="#a5a5a5" strokeWidth="1.400"><path d="M1 5.500l4-4 4 4" /></svg>
            <svg width="16" height="16">
              <circle cx="8" cy="8" r="7.500" fill="#0f69c5" stroke="#0a4b95" />
              <text x="8" y="12.500" textAnchor="middle" fontFamily="Open Sans" fontWeight="700" fontSize="12" fill="#fff">?</text>
            </svg>
          </TabTools>
        </TabBar>
        <RibbonBar />
        <Notice>
          <Fit w={683}>WordPad does not support all of the features of this document’s format. Some content might be missing or displayed improperly.</Fit>
          <svg width="9" height="9"><path d="M1 1l7 7M8 1 1 8" stroke="#6b6b6b" strokeWidth="1.600" /></svg>
        </Notice>
        <Workspace>
          <RulerStrip><Ruler /></RulerStrip>
          <Scroller>
            <PageEdge />
            <Page>
              <Heading><Fit w={243}>Introduction to Data Science</Fit></Heading>
              <Bullets>
                {questions.map(([text, w]) => (
                  <Bullet key={text}><Dot /><Fit w={w}>{text}</Fit></Bullet>
                ))}
              </Bullets>
            </Page>
            <PageEdge $right />
            <ScrollTrack><ScrollThumb /></ScrollTrack>
          </Scroller>
        </Workspace>
        <StatusBar>
          <StatusSep $mr={30} />
          <StatusSep $mr={21} />
          <Fit w={28}>100%</Fit>
          <Gap $w={7} />
          <svg width="16" height="16">
            <circle cx="8" cy="8" r="7.300" fill="#e4e4e4" stroke="#777" />
            <path d="M4 8h8" stroke="#444" strokeWidth="2" />
          </svg>
          <Gap $w={9} />
          <svg width="86" height="20">
            <path d="M.5 7.500h85v3H.5z" fill="#e7eaea" stroke="#d6d6d6" />
            <path d="M39 4h10v10l-5 4.500-5-4.500z" fill="#0a74cf" />
          </svg>
          <Gap $w={11} />
          <svg width="16" height="16">
            <circle cx="8" cy="8" r="7.300" fill="#f4f4f4" stroke="#777" />
            <path d="M4 8h8M8 4v8" stroke="#444" strokeWidth="2" />
          </svg>
        </StatusBar>
        <TaskbarView />
        <Tooltip><Fit w={103}>04 November 2023</Fit></Tooltip>
      </Screen>
    </>
  );
}
